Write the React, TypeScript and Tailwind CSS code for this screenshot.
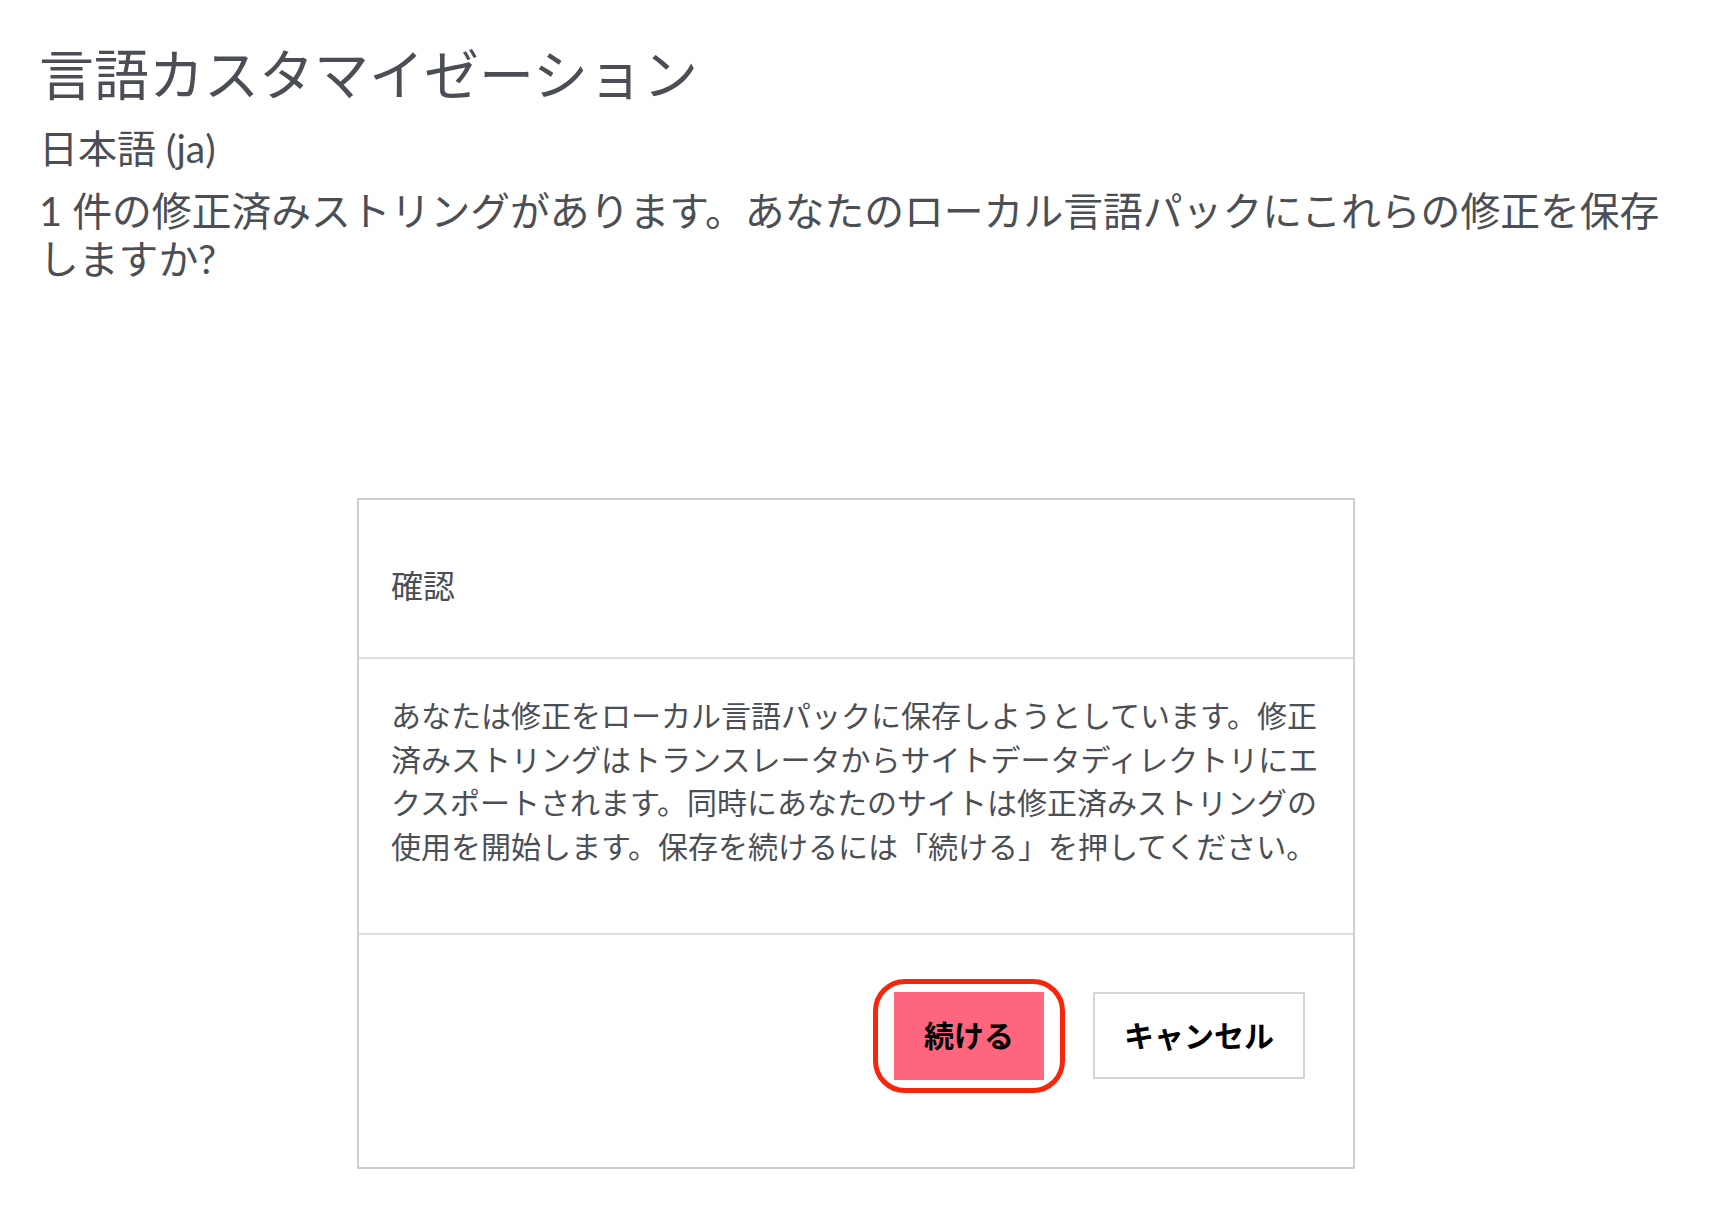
import React from 'react';

const font = { fontFamily: 'Lato, "Noto Sans CJK JP", sans-serif' };

const App: React.FC = () => {
  return (
    <main className="w-[1712px] min-h-[1210px] bg-white text-[#4b4f55]" style={font}>
      <div className="px-[39px] pt-[42px]">
        <h1 className="text-[55px] leading-[64px] font-normal">言語カスタマイゼーション</h1>
        <h2 className="mt-[18px] text-[39px] leading-[48px] font-normal">日本語 (ja)</h2>
        <p className="mt-[15px] text-[39.8px] leading-[48px]">
          1 件の修正済みストリングがあります。あなたのローカル言語パックにこれらの修正を保存しますか?
        </p>
      </div>

      <div className="mx-auto mt-[215px] w-[998px] border-2 border-[#cfcfcf] bg-white">
        <div className="h-[159px] flex items-center px-[32px] pt-[14px] border-b-2 border-[#dedede]">
          <h3 className="text-[32px] leading-[40px] font-normal">確認</h3>
        </div>

        <div className="px-[32px] pt-[35px] pb-[64px] border-b-2 border-[#dedede]">
          <p className="text-[30px] leading-[43.7px] w-[935px]">
            あなたは修正をローカル言語パックに保存しようとしています。修正済みストリングはトランスレータからサイトデータディレクトリにエクスポートされます。同時にあなたのサイトは修正済みストリングの使用を開始します。保存を続けるには「続ける」を押してください。
          </p>
        </div>

        <div className="flex justify-end items-center gap-[49px] pr-[48px] pt-[57px] pb-[87px]">
          <div className="relative">
            <button className="w-[150px] h-[88px] bg-[#fd667c] text-black text-[30px] font-bold">
              続ける
            </button>
            <span className="pointer-events-none absolute -left-[21px] -top-[13px] -right-[21px] -bottom-[13px] rounded-[32px] border-[5px] border-[#f5260b]" />
          </div>
          <button className="w-[212px] h-[87px] bg-white border-2 border-[#d4d4d4] text-black text-[30px] font-bold">
            キャンセル
          </button>
        </div>
      </div>
    </main>
  );
};

export default App;
